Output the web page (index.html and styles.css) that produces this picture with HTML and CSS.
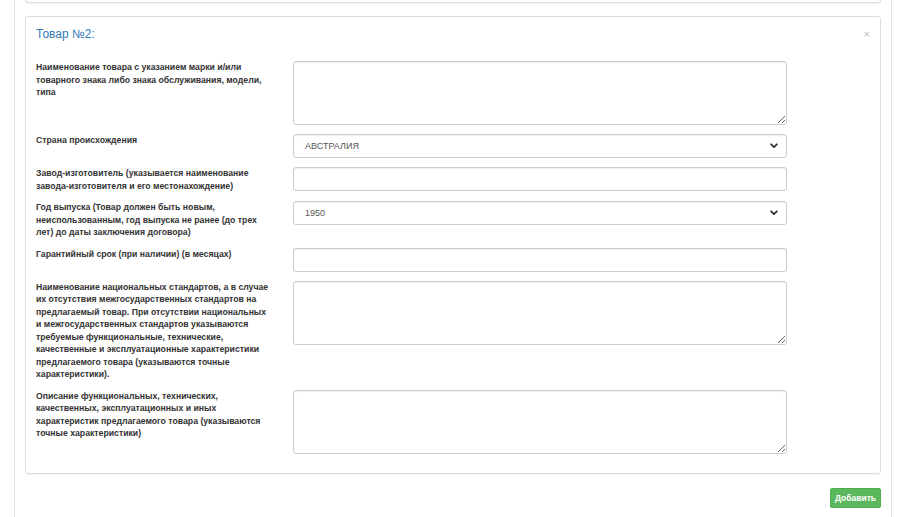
FILE: index.html
```html
<!DOCTYPE html>
<html lang="ru">
<head>
<meta charset="utf-8">
<title>Товар</title>
<link rel="stylesheet" href="styles.css">
</head>
<body>
<div class="wrap">
  <div class="panel-prev"></div>
  <div class="panel">
    <div class="panel-head">
      <span class="title">Товар №2:</span>
      <span class="close">×</span>
    </div>
    <div class="form">
      <label class="lbl">Наименование товара с указанием марки и/или товарного знака либо знака обслуживания, модели, типа</label>
      <textarea class="ctl ta"></textarea>

      <label class="lbl">Страна происхождения</label>
      <div class="ctl sel"><span>АВСТРАЛИЯ</span><svg class="chev" viewBox="0 0 8 6" width="8" height="6"><path d="M1.2 1.3 L4 4.2 L6.8 1.3" fill="none" stroke="#333" stroke-width="1.8" stroke-linecap="round" stroke-linejoin="round"/></svg></div>

      <label class="lbl">Завод-изготовитель (указывается наименование завода-изготовителя и его местонахождение)</label>
      <input class="ctl inp" type="text">

      <label class="lbl">Год выпуска (Товар должен быть новым, неиспользованным, год выпуска не ранее (до трех лет) до даты заключения договора)</label>
      <div class="ctl sel"><span>1950</span><svg class="chev" viewBox="0 0 8 6" width="8" height="6"><path d="M1.2 1.3 L4 4.2 L6.8 1.3" fill="none" stroke="#333" stroke-width="1.8" stroke-linecap="round" stroke-linejoin="round"/></svg></div>

      <label class="lbl">Гарантийный срок (при наличии) (в месяцах)</label>
      <input class="ctl inp" type="text">

      <label class="lbl">Наименование национальных стандартов, а в случае их отсутствия межгосударственных стандартов на предлагаемый товар. При отсутствии национальных и межгосударственных стандартов указываются требуемые функциональные, технические, качественные и эксплуатационные характеристики предлагаемого товара (указываются точные характеристики).</label>
      <textarea class="ctl ta"></textarea>

      <label class="lbl">Описание функциональных, технических, качественных, эксплуатационных и иных характеристик предлагаемого товара (указываются точные характеристики)</label>
      <textarea class="ctl ta"></textarea>
    </div>
  </div>
  <div class="actions">
    <button class="btn-add" type="button">Добавить</button>
  </div>
</div>
</body>
</html>
```

FILE: styles.css
```css
html, body {
  margin: 0;
  padding: 0;
  background: #fff;
  font-family: "Liberation Sans", Arial, sans-serif;
  color: #333;
}

.wrap {
  margin-left: 14px;
  width: 878px;
  min-height: 517px;
  box-sizing: border-box;
  border-left: 1px solid #e3e3e3;
  border-right: 1px solid #e3e3e3;
  padding: 0 10px;
}

.panel-prev {
  height: 2px;
  border: 1px solid #ddd;
  border-top: none;
  border-radius: 0 0 3px 3px;
  box-shadow: 0 1px 1px rgba(0,0,0,.05);
  margin-bottom: 13px;
}

.panel {
  border: 1px solid #ddd;
  border-radius: 3px;
  box-shadow: 0 1px 1px rgba(0,0,0,.05);
  padding: 9px 10px 19px 10px;
}

.panel-head {
  display: flex;
  justify-content: space-between;
  align-items: center;
  height: 17px;
  margin-bottom: 18px;
}

.title {
  font-size: 12px;
  line-height: 17px;
  color: #337ab7;
}

.close {
  font-size: 11px;
  color: #bbb;
  margin-right: 0;
  line-height: 17px;
}

.form {
  display: grid;
  grid-template-columns: 235px 494px;
  column-gap: 22px;
  row-gap: 9px;
  align-items: start;
}

.lbl {
  font-size: 8.7px;
  font-weight: bold;
  line-height: 12.5px;
  color: #333;
}

.ctl {
  box-sizing: border-box;
  width: 494px;
  border: 1px solid #ccc;
  border-radius: 3px;
  background: #fff;
  box-shadow: inset 0 1px 1px rgba(0,0,0,.075);
  font-family: "Liberation Sans", Arial, sans-serif;
  font-size: 9px;
  color: #555;
  margin: 0;
}

.ta {
  height: 64px;
  display: block;
  resize: vertical;
}

.inp {
  height: 24px;
  display: block;
}

.sel {
  height: 24px;
  display: flex;
  align-items: center;
  justify-content: space-between;
  padding: 0 8px 0 11px;
}

.chev {
  display: block;
}

.actions {
  display: flex;
  justify-content: flex-end;
  padding-top: 14px;
}

.btn-add {
  background: #5cb85c;
  border: 1px solid #4cae4c;
  border-radius: 2px;
  color: #fff;
  font-family: "Liberation Sans", Arial, sans-serif;
  font-size: 8.5px;
  font-weight: bold;
  height: 20px;
  width: 51px;
  padding: 0;
}
```
